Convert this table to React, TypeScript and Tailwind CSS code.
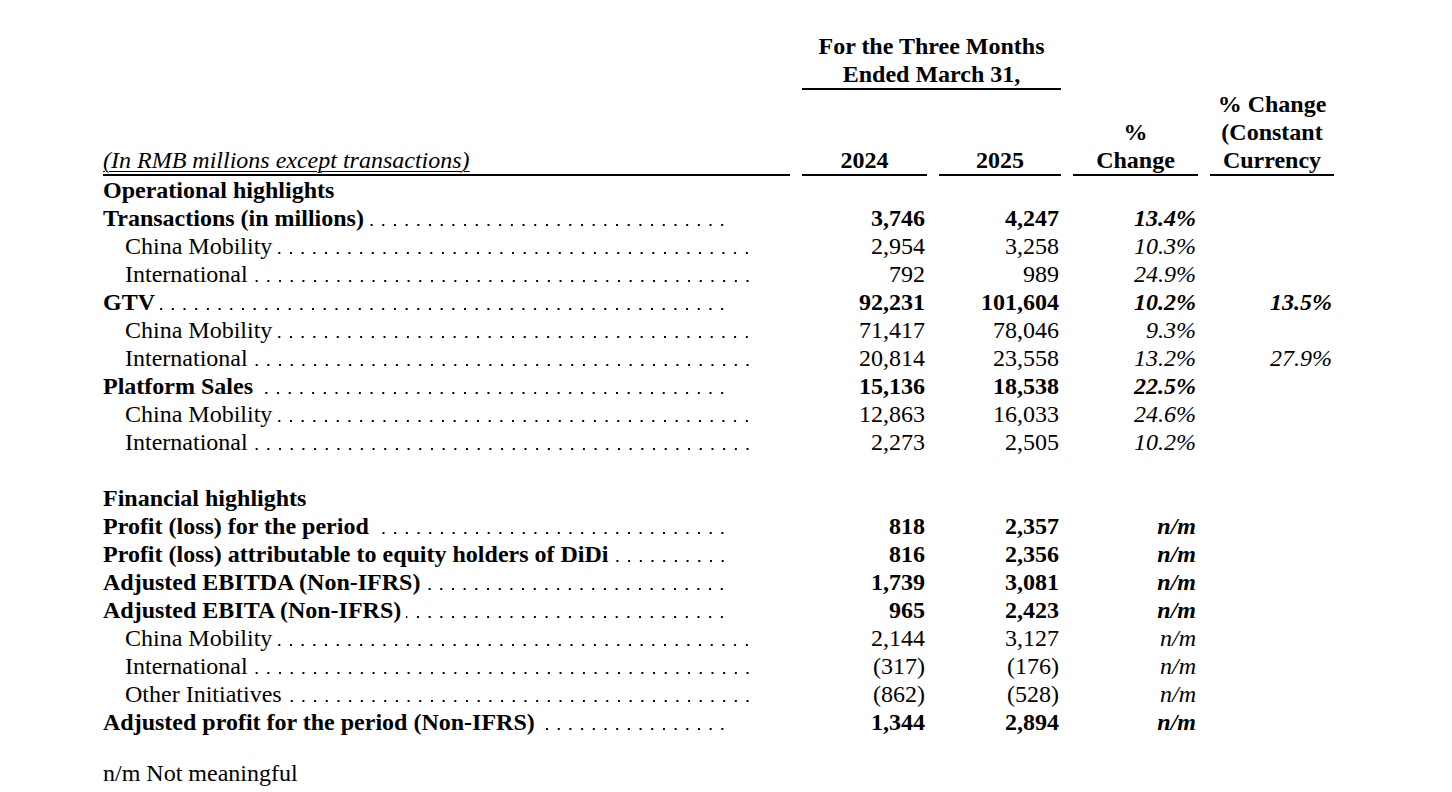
import clsx from "clsx";

/**
 * Quarterly highlights table — operational and financial metrics, 2024 vs 2025.
 * Printed-report look: serif type, dot leaders, thick header rules.
 */

type Row = {
  label: string;
  kind: "heading" | "main" | "sub" | "blank";
  v24?: string;
  v25?: string;
  pct?: string;
  cc?: string;
};

const rows: Row[] = [
  { label: "Operational highlights", kind: "heading" },
  { label: "Transactions (in millions)", kind: "main", v24: "3,746", v25: "4,247", pct: "13.4%" },
  { label: "China Mobility", kind: "sub", v24: "2,954", v25: "3,258", pct: "10.3%" },
  { label: "International", kind: "sub", v24: "792", v25: "989", pct: "24.9%" },
  { label: "GTV", kind: "main", v24: "92,231", v25: "101,604", pct: "10.2%", cc: "13.5%" },
  { label: "China Mobility", kind: "sub", v24: "71,417", v25: "78,046", pct: "9.3%" },
  { label: "International", kind: "sub", v24: "20,814", v25: "23,558", pct: "13.2%", cc: "27.9%" },
  { label: "Platform Sales", kind: "main", v24: "15,136", v25: "18,538", pct: "22.5%" },
  { label: "China Mobility", kind: "sub", v24: "12,863", v25: "16,033", pct: "24.6%" },
  { label: "International", kind: "sub", v24: "2,273", v25: "2,505", pct: "10.2%" },
  { label: "", kind: "blank" },
  { label: "Financial highlights", kind: "heading" },
  { label: "Profit (loss) for the period", kind: "main", v24: "818", v25: "2,357", pct: "n/m" },
  { label: "Profit (loss) attributable to equity holders of DiDi", kind: "main", v24: "816", v25: "2,356", pct: "n/m" },
  { label: "Adjusted EBITDA (Non-IFRS)", kind: "main", v24: "1,739", v25: "3,081", pct: "n/m" },
  { label: "Adjusted EBITA (Non-IFRS)", kind: "main", v24: "965", v25: "2,423", pct: "n/m" },
  { label: "China Mobility", kind: "sub", v24: "2,144", v25: "3,127", pct: "n/m" },
  { label: "International", kind: "sub", v24: "(317)", v25: "(176)", pct: "n/m" },
  { label: "Other Initiatives", kind: "sub", v24: "(862)", v25: "(528)", pct: "n/m" },
  { label: "Adjusted profit for the period (Non-IFRS)", kind: "main", v24: "1,344", v25: "2,894", pct: "n/m" },
];

/** Dot leader drawn as a repeating dot pattern, anchored right so columns of dots line up. */
function Dots() {
  return (
    <span className="ml-[5px] min-w-0 flex-1 bg-[radial-gradient(circle,#000_1.1px,transparent_1.5px)] bg-size-[11.7px_4px] bg-position-[right_bottom_5px] bg-repeat-x" />
  );
}

export default function App() {
  return (
    <div className="min-h-screen bg-white pl-[103px] pt-8 font-['Liberation_Serif','Times_New_Roman',serif] text-[24px] leading-[28px] text-black">
      <div className="grid grid-cols-[687px_125px_122px_125px_124px] gap-x-3">
        {/* Period group header */}
        <div />
        <div className="col-span-2 border-b-2 border-black text-center font-bold">
          <div>For the Three Months</div>
          <div>Ended March 31,</div>
        </div>
        <div />
        <div />

        {/* Column headers */}
        <div className="flex h-[86px] items-end border-b-2 border-black">
          <span className="italic underline decoration-1 underline-offset-[3px]">
            (In RMB millions except transactions)
          </span>
        </div>
        <div className="flex h-[86px] items-end justify-center border-b-2 border-black font-bold">2024</div>
        <div className="flex h-[86px] items-end justify-center border-b-2 border-black font-bold">2025</div>
        <div className="flex h-[86px] flex-col items-center justify-end border-b-2 border-black font-bold">
          <span>%</span>
          <span>Change</span>
        </div>
        <div className="flex h-[86px] flex-col items-center justify-end border-b-2 border-black font-bold">
          <span>% Change</span>
          <span>(Constant</span>
          <span>Currency</span>
        </div>

        {/* Body */}
        {rows.map((r, i) => {
          if (r.kind === "blank") {
            return <div key={i} className="col-span-5 h-7" />;
          }
          if (r.kind === "heading") {
            return (
              <div key={i} className="col-span-5 font-bold">
                {r.label}
              </div>
            );
          }
          const bold = r.kind === "main";
          return (
            <div key={i} className={clsx("col-span-5 grid grid-cols-subgrid", bold && "font-bold")}>
              <div className={clsx("flex min-w-0", bold ? "pr-[62px]" : "pl-[22px] pr-[37px]")}>
                <span className="shrink-0 whitespace-nowrap">{r.label}</span>
                <Dots />
              </div>
              <div className="pr-[2px] text-right">{r.v24}</div>
              <div className="pr-[2px] text-right">{r.v25}</div>
              <div className="pr-[2px] text-right italic">{r.pct}</div>
              <div className="pr-[2px] text-right italic">{r.cc}</div>
            </div>
          );
        })}
      </div>

      <div className="mt-[23px]">n/m Not meaningful</div>
    </div>
  );
}
